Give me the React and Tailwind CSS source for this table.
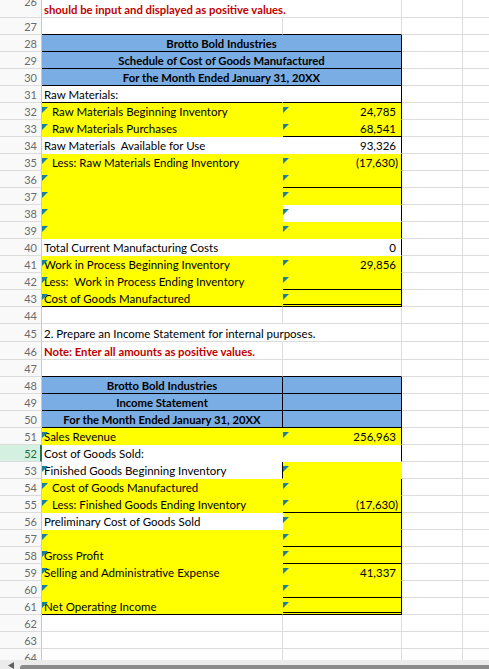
import React from 'react';

const BG = { y: 'bg-[#ffff00]', b: 'bg-[#7aade3]', w: 'bg-white' };
const BB = { y: 'border-b-[#ffff00]', b: 'border-b-[#7aade3]', w: 'border-b-white' };
const BR = { y: 'border-r-[#ffff00]', b: 'border-r-[#7aade3]', w: 'border-r-white' };

function Cell({ w, c = {} }) {
  const { t, fill, bb, br, mk, ind, al, bold, red } = c;
  const cls = ['relative flex items-center shrink-0 whitespace-pre pt-[1px]', w];
  if (fill) cls.push(BG[fill]);
  if (bb === 'd') cls.push('border-b-[3px] border-double border-b-black');
  else cls.push('border-b', bb === 'k' ? 'border-b-black' : fill ? BB[fill] : 'border-b-[#dcdcdc]');
  cls.push('border-r', br === 'k' ? 'border-r-black' : br === 'n' ? 'border-r-white' : fill ? BR[fill] : 'border-r-[#dcdcdc]');
  if (al === 'r') cls.push('justify-end', t && t.endsWith(')') ? 'pr-[3px]' : 'pr-[5px]');
  else if (al === 'c') cls.push('justify-center');
  else cls.push(ind ? 'pl-[10px]' : 'pl-[2px]');
  if (bold) cls.push('font-bold text-[11.3px]');
  cls.push(red ? 'text-[#c00000]' : 'text-black');
  return (
    <div className={cls.join(' ')}>
      {mk && (
        <span className="absolute left-0 top-[4px] h-[6px] w-[6px] bg-[#1d7f99] [clip-path:polygon(0_0,100%_0,0_100%)]" />
      )}
      {t}
    </div>
  );
}

function Head({ n, sel, top }) {
  return (
    <div
      className={
        'flex w-[42px] shrink-0 items-center justify-end border-b border-b-[#dcdcdc] pt-[1px] text-[11px] ' +
        (sel
          ? 'border-r-2 border-r-[#217346] bg-[#d3f0e0] pr-[3px] text-[#1e6b3e]'
          : 'border-r border-r-[#c8c8c8] bg-[#f9f9f9] pr-[4px] text-[#6b6b6b]')
      }
    >
      <span className={top ? 'relative -top-[8px]' : ''}>{n}</span>
    </div>
  );
}

const HB = { fill: 'b', bb: 'k', br: 'k', al: 'c', bold: 1 };

const rows = [
  { n: 26, h: 'h-[18px]', top: 1, a: { t: 'should be input and displayed as positive values.', red: 1, bold: 1, br: 'n' } },
  { n: 27, a: { bb: 'k' }, b: { bb: 'k' } },
  { n: 28, m: { t: 'Brotto Bold Industries', ...HB } },
  { n: 29, m: { t: 'Schedule of Cost of Goods Manufactured', ...HB } },
  { n: 30, m: { t: 'For the Month Ended January 31, 20XX', ...HB } },
  { n: 31, a: { t: 'Raw Materials:', fill: 'w', bb: 'k' }, b: { fill: 'w', bb: 'k', br: 'k' } },
  { n: 32, a: { t: 'Raw Materials Beginning Inventory', fill: 'y', mk: 1, ind: 1 }, b: { t: '24,785', fill: 'y', mk: 1, al: 'r', br: 'k' } },
  { n: 33, a: { t: 'Raw Materials Purchases', fill: 'y', mk: 1, ind: 1 }, b: { t: '68,541', fill: 'y', mk: 1, al: 'r', br: 'k', bb: 'k' } },
  { n: 34, a: { t: 'Raw Materials  Available for Use', fill: 'w' }, b: { t: '93,326', fill: 'w', al: 'r', br: 'k' } },
  { n: 35, a: { t: 'Less: Raw Materials Ending Inventory', fill: 'y', mk: 1, ind: 1 }, b: { t: '(17,630)', fill: 'y', mk: 1, al: 'r', br: 'k' } },
  { n: 36, a: { fill: 'y', mk: 1 }, b: { fill: 'y', mk: 1, br: 'k', bb: 'k' } },
  { n: 37, a: { fill: 'y', mk: 1 }, b: { fill: 'y', mk: 1, br: 'k' } },
  { n: 38, a: { fill: 'y', mk: 1 }, b: { fill: 'w', mk: 1, br: 'k' } },
  { n: 39, a: { fill: 'y', mk: 1 }, b: { fill: 'y', mk: 1, br: 'k' } },
  { n: 40, a: { t: 'Total Current Manufacturing Costs', fill: 'w' }, b: { t: '0', fill: 'w', al: 'r', br: 'k' } },
  { n: 41, a: { t: 'Work in Process Beginning Inventory', fill: 'y', mk: 1 }, b: { t: '29,856', fill: 'y', mk: 1, al: 'r', br: 'k' } },
  { n: 42, a: { t: 'Less:  Work in Process Ending Inventory', fill: 'y', mk: 1 }, b: { fill: 'y', mk: 1, br: 'k', bb: 'k' } },
  { n: 43, a: { t: 'Cost of Goods Manufactured', fill: 'y', mk: 1, bb: 'k' }, b: { fill: 'y', mk: 1, br: 'k', bb: 'd' } },
  { n: 44 },
  { n: 45, h: 'h-[18px]', a: { t: '2. Prepare an Income Statement for internal purposes.', br: 'n' } },
  { n: 46, h: 'h-[18px]', a: { t: 'Note: Enter all amounts as positive values.', red: 1, bold: 1 } },
  { n: 47, a: { bb: 'k' }, b: { bb: 'k' } },
  { n: 48, a: { t: 'Brotto Bold Industries', ...HB }, b: { fill: 'b', bb: 'k', br: 'k' } },
  { n: 49, a: { t: 'Income Statement', ...HB }, b: { fill: 'b', bb: 'k', br: 'k' } },
  { n: 50, a: { t: 'For the Month Ended January 31, 20XX', ...HB }, b: { fill: 'b', bb: 'k', br: 'k' } },
  { n: 51, a: { t: 'Sales Revenue', fill: 'y', mk: 1 }, b: { t: '256,963', fill: 'y', mk: 1, al: 'r', br: 'k' } },
  { n: 52, sel: 1, a: { t: 'Cost of Goods Sold:', fill: 'w' }, b: { fill: 'w', br: 'k' } },
  { n: 53, a: { t: 'Finished Goods Beginning Inventory', fill: 'w', mk: 1, br: 'k' }, b: { fill: 'y', mk: 1 } },
  { n: 54, a: { t: 'Cost of Goods Manufactured', fill: 'y', mk: 1, ind: 1 }, b: { fill: 'y', mk: 1, br: 'k' } },
  { n: 55, a: { t: 'Less: Finished Goods Ending Inventory', fill: 'y', mk: 1, ind: 1 }, b: { t: '(17,630)', fill: 'y', mk: 1, al: 'r', br: 'k', bb: 'k' } },
  { n: 56, a: { t: 'Preliminary Cost of Goods Sold', fill: 'w' }, b: { fill: 'y', mk: 1, br: 'k' } },
  { n: 57, a: { fill: 'y', mk: 1 }, b: { fill: 'y', mk: 1, br: 'k', bb: 'k' } },
  { n: 58, a: { t: 'Gross Profit', fill: 'y', mk: 1 }, b: { fill: 'y', mk: 1, br: 'k', bb: 'k' } },
  { n: 59, a: { t: 'Selling and Administrative Expense', fill: 'y', mk: 1 }, b: { t: '41,337', fill: 'y', mk: 1, al: 'r', br: 'k' } },
  { n: 60, a: { fill: 'y', mk: 1 }, b: { fill: 'y', mk: 1, br: 'k', bb: 'k' } },
  { n: 61, a: { t: 'Net Operating Income', fill: 'y', mk: 1, bb: 'k' }, b: { fill: 'y', mk: 1, br: 'k', bb: 'd' } },
  { n: 62 },
  { n: 63 },
  { n: 64 },
];

export default function App() {
  return (
    <div className="h-[669px] w-[489px] overflow-hidden bg-white font-[Lato,sans-serif] text-[11.5px] leading-[13px]">
      <div className="h-[660px] overflow-hidden">
        {rows.map((r) => (
          <div key={r.n} className={'flex ' + (r.h || 'h-[17px]')}>
            <Head n={r.n} sel={r.sel} top={r.top} />
            {r.m ? (
              <Cell w="w-[360px]" c={r.m} />
            ) : (
              <>
                <Cell w="w-[241px]" c={r.a} />
                <Cell w="w-[119px]" c={r.b} />
              </>
            )}
            <Cell w="w-[61px]" />
            <Cell w="w-[100px]" />
          </div>
        ))}
      </div>
      <div className="flex h-[9px] items-end bg-[#ebebeb]">
        <svg width="6" height="7" viewBox="0 0 6 7" className="ml-[8px]">
          <polygon points="6,0 6,7 0,3.5" fill="#606060" />
        </svg>
        <div className="ml-[6px] h-[4px] flex-1 rounded-tl-[3px] bg-[#8a8a8a]" />
      </div>
    </div>
  );
}
